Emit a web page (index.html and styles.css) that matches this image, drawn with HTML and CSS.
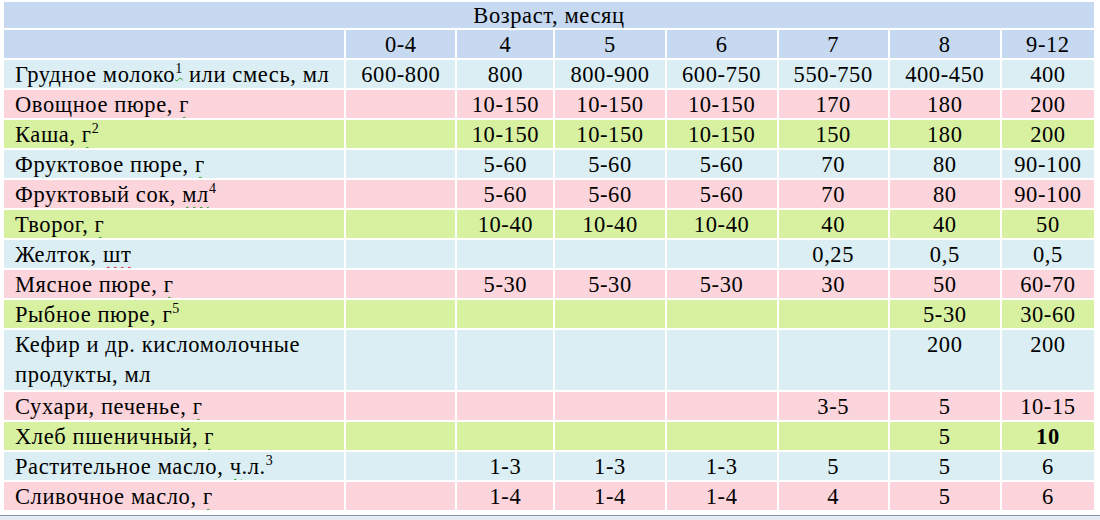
FILE: index.html
```html
<!DOCTYPE html>
<html>
<head>
<meta charset="utf-8">
<link rel="stylesheet" href="styles.css">
</head>
<body>
<div class="page">
<table class="feed">
  <colgroup>
    <col class="c-name"><col class="c-a"><col class="c-b"><col class="c-a"><col class="c-c"><col class="c-a"><col class="c-c"><col class="c-d">
  </colgroup>
  <tr class="hd hd1"><td colspan="8" class="num">Возраст, месяц</td></tr>
  <tr class="hd"><td></td><td class="num">0-4</td><td class="num">4</td><td class="num">5</td><td class="num">6</td><td class="num">7</td><td class="num">8</td><td class="num">9-12</td></tr>
  <tr class="blue"><td class="name">Грудное молоко<sup class="sq">1</sup> или смесь, мл</td><td class="num">600-800</td><td class="num">800</td><td class="num">800-900</td><td class="num">600-750</td><td class="num">550-750</td><td class="num">400-450</td><td class="num">400</td></tr>
  <tr class="pink"><td class="name">Овощное пюре, <span class="sq">г</span></td><td></td><td class="num">10-150</td><td class="num">10-150</td><td class="num">10-150</td><td class="num">170</td><td class="num">180</td><td class="num">200</td></tr>
  <tr class="green"><td class="name">Каша, <span class="sq">г</span><sup>2</sup></td><td></td><td class="num">10-150</td><td class="num">10-150</td><td class="num">10-150</td><td class="num">150</td><td class="num">180</td><td class="num">200</td></tr>
  <tr class="blue"><td class="name">Фруктовое пюре, <span class="sq">г</span></td><td></td><td class="num">5-60</td><td class="num">5-60</td><td class="num">5-60</td><td class="num">70</td><td class="num">80</td><td class="num">90-100</td></tr>
  <tr class="pink"><td class="name">Фруктовый сок, <span class="sq">мл</span><sup>4</sup></td><td></td><td class="num">5-60</td><td class="num">5-60</td><td class="num">5-60</td><td class="num">70</td><td class="num">80</td><td class="num">90-100</td></tr>
  <tr class="green"><td class="name">Творог, <span class="sq">г</span></td><td></td><td class="num">10-40</td><td class="num">10-40</td><td class="num">10-40</td><td class="num">40</td><td class="num">40</td><td class="num">50</td></tr>
  <tr class="blue"><td class="name">Желток, <span class="sqr">шт</span></td><td></td><td></td><td></td><td></td><td class="num">0,25</td><td class="num">0,5</td><td class="num">0,5</td></tr>
  <tr class="pink"><td class="name">Мясное пюре, <span class="sq">г</span></td><td></td><td class="num">5-30</td><td class="num">5-30</td><td class="num">5-30</td><td class="num">30</td><td class="num">50</td><td class="num">60-70</td></tr>
  <tr class="green"><td class="name">Рыбное пюре, г<sup>5</sup></td><td></td><td></td><td></td><td></td><td></td><td class="num">5-30</td><td class="num">30-60</td></tr>
  <tr class="blue tall"><td class="name">Кефир и др. кисломолочные продукты, мл</td><td></td><td></td><td></td><td></td><td></td><td class="num">200</td><td class="num">200</td></tr>
  <tr class="pink"><td class="name">Сухари, печенье, <span class="sq">г</span></td><td></td><td></td><td></td><td></td><td class="num">3-5</td><td class="num">5</td><td class="num">10-15</td></tr>
  <tr class="green"><td class="name">Хлеб пшеничный, <span class="sq">г</span></td><td></td><td></td><td></td><td></td><td></td><td class="num">5</td><td class="num strong">10</td></tr>
  <tr class="blue"><td class="name">Растительное масло, <span class="sq">ч</span>.л.<sup>3</sup></td><td></td><td class="num">1-3</td><td class="num">1-3</td><td class="num">1-3</td><td class="num">5</td><td class="num">5</td><td class="num">6</td></tr>
  <tr class="pink"><td class="name">Сливочное масло, <span class="sq">г</span></td><td></td><td class="num">1-4</td><td class="num">1-4</td><td class="num">1-4</td><td class="num">4</td><td class="num">5</td><td class="num">6</td></tr>
</table>
<div class="statusbar"></div>
</div>
</body>
</html>
```

FILE: styles.css
```css
html, body {
  margin: 0;
  padding: 0;
  background: #ffffff;
  font-family: "Liberation Serif", "DejaVu Serif", "Noto Serif", Times, serif;
}
.page {
  padding: 2px 0 0 4px;
  width: 1096px;
}
.feed {
  border-collapse: collapse;
  table-layout: fixed;
  width: 1090px;
  font-family: "Liberation Serif", "DejaVu Serif", "Noto Serif", Times, serif;
  font-size: 22.5px;
  letter-spacing: 0.6px;
  color: #000;
}
.c-name { width: 341px; }
.c-a { width: 111px; }
.c-b { width: 98px; }
.c-c { width: 112px; }
.c-d { width: 93px; }
.feed td {
  border: 0;
  border-bottom: 2px solid #ffffff;
  border-right: 2px solid #ffffff;
  padding: 2px 0 0;
  height: 26px;
  line-height: 26px;
  vertical-align: top;
  white-space: nowrap;
  overflow: hidden;
}
.feed td:last-child { border-right: 0; }
.feed .hd1 td { height: 24px; line-height: 24px; padding-top: 2px; }
.feed .tall td { height: 55px; }
.feed .tall td.name { line-height: 30px; padding-top: 0; height: 57px; }
.feed td.name {
  padding-left: 11px;
  white-space: normal;
}
.feed td.num { text-align: center; }
.feed .strong { font-weight: bold; }
.hd td { background: #c6d9f1; }
.blue td { background: #daeef3; }
.pink td { background: #fcd4dc; }
.green td { background: #d8f1a0; }
sup {
  font-size: 14px;
  line-height: 0;
  vertical-align: 9px;
}
.sq {
  text-decoration: underline wavy #2a9a2a;
  text-decoration-thickness: 1px;
  text-underline-offset: 4px;
}
.sqr {
  text-decoration: underline wavy #e02020;
  text-decoration-thickness: 1px;
  text-underline-offset: 4px;
}
.statusbar {
  margin-top: 3px;
  margin-left: -4px;
  width: 1100px;
  height: 5px;
  border-top: 1px solid #8593a8;
  background: #e3ebf5;
}
```
